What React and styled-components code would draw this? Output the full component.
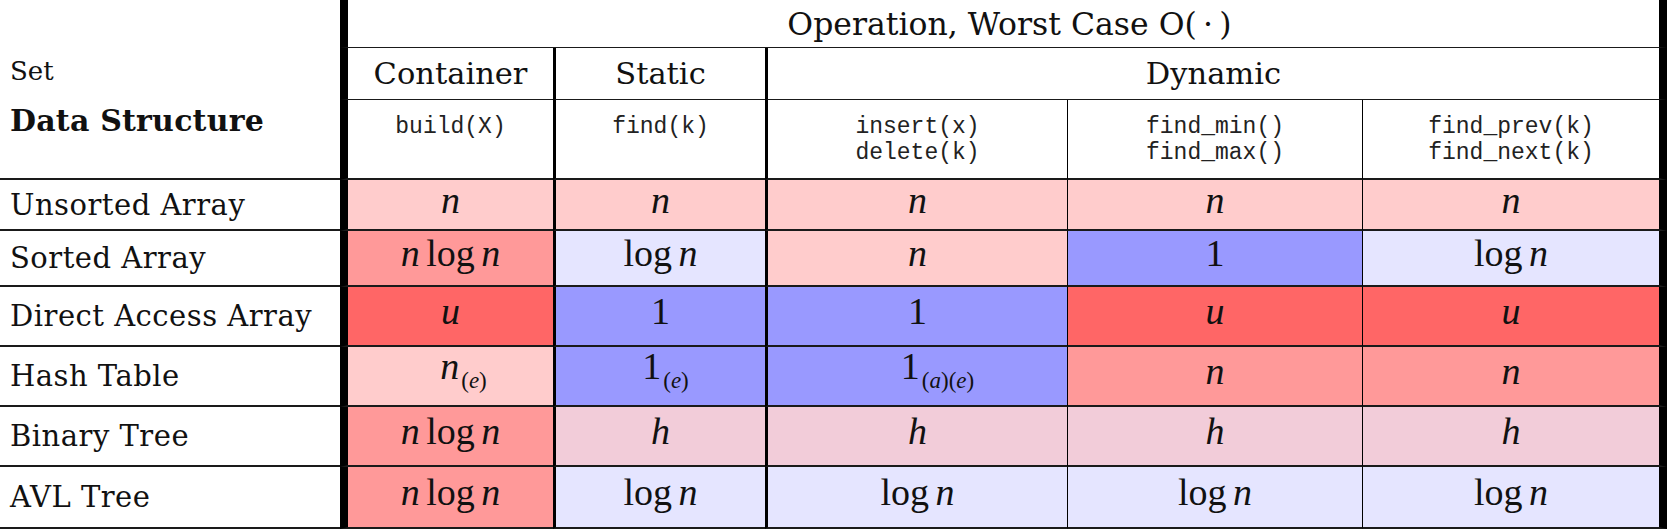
import styled, { createGlobalStyle } from "styled-components";

const GlobalStyle = createGlobalStyle`
  html, body {
    margin: 0;
    padding: 0;
    background: #fff;
  }
  body {
    font-family: "DejaVu Serif", serif;
    color: #111;
  }
`;

const PINK = "#ffcccc";
const SALMON = "#ff9999";
const RED = "#ff6666";
const LAV = "#e5e5ff";
const BLUE = "#9999ff";
const MAUVE = "#f2ccd9";

// left border width per column: thick bar after the labels, medium between groups
const LEFT = [0, 8, 3, 3, 1, 1];

const ops = [
    ["build(X)"],
    ["find(k)"],
    ["insert(x)", "delete(k)"],
    ["find_min()", "find_max()"],
    ["find_prev(k)", "find_next(k)"],
];

const rows = [
    { name: "Unsorted Array", cells: [["n", PINK], ["n", PINK], ["n", PINK], ["n", PINK], ["n", PINK]] },
    { name: "Sorted Array", cells: [["nlogn", SALMON], ["logn", LAV], ["n", PINK], ["1", BLUE], ["logn", LAV]] },
    { name: "Direct Access Array", cells: [["u", RED], ["1", BLUE], ["1", BLUE], ["u", RED], ["u", RED]] },
    { name: "Hash Table", cells: [["n(e)", PINK, 26], ["1(e)", BLUE, 10], ["1(a)(e)", BLUE, 40], ["n", SALMON], ["n", SALMON]] },
    { name: "Binary Tree", cells: [["nlogn", SALMON], ["h", MAUVE], ["h", MAUVE], ["h", MAUVE], ["h", MAUVE]] },
    { name: "AVL Tree", cells: [["nlogn", SALMON], ["logn", LAV], ["logn", LAV], ["logn", LAV], ["logn", LAV]] },
];

const Math = ({ expr }) => {
    switch (expr) {
        case "nlogn":
            return <Expr><Var>n</Var><Log>log</Log><Var>n</Var></Expr>;
        case "logn":
            return <Expr><Log $first>log</Log><Var>n</Var></Expr>;
        case "n(e)":
            return <Expr><Var>n</Var><Sub>(<i>e</i>)</Sub></Expr>;
        case "1(e)":
            return <Expr>1<Sub>(<i>e</i>)</Sub></Expr>;
        case "1(a)(e)":
            return <Expr>1<Sub>(<i>a</i>)(<i>e</i>)</Sub></Expr>;
        case "1":
            return <Expr>1</Expr>;
        default:
            return <Expr><Var>{expr}</Var></Expr>;
    }
};

const App = () => {
    return (
        <>
            <GlobalStyle />
            <Table>
                <LabelHead>
                    <SetTitle>Set</SetTitle>
                    <DsTitle>Data Structure</DsTitle>
                </LabelHead>
                <TopHeader $col={1} $last>
                    Operation, Worst Case O(&#8201;·&#8201;)
                </TopHeader>

                <GroupHead $col={1}>Container</GroupHead>
                <GroupHead $col={2}>Static</GroupHead>
                <GroupHead $col={3} $last $span={3}>Dynamic</GroupHead>

                {ops.map((lines, i) => (
                    <OpCell key={i} $col={i + 1} $last={i === ops.length - 1}>
                        {lines.map(l => <div key={l}>{l}</div>)}
                    </OpCell>
                ))}

                {rows.map(row => (
                    <Row key={row.name}>
                        <Label>{row.name}</Label>
                        {row.cells.map(([expr, bg, shift], i) => (
                            <Value
                                key={i}
                                $col={i + 1}
                                $last={i === row.cells.length - 1}
                                $bg={bg}
                                $shift={shift}
                            >
                                <Math expr={expr} />
                            </Value>
                        ))}
                    </Row>
                ))}
            </Table>
        </>
    );
};

const Row = styled.div`
    display: contents;
`;

const Table = styled.div`
    display: grid;
    grid-template-columns: 340px 213px 212px 302px 295px 305px;
    grid-template-rows: 48px 52px 80px 51px 56px 60px 60px 60px 62px;
    width: 1667px;
    height: 529px;
    overflow: hidden;
`;

const Cell = styled.div`
    box-sizing: border-box;
    min-width: 0;
    border-bottom: 2px solid #1a1a1a;
    border-left: ${p => LEFT[p.$col] || 0}px solid #000;
    border-right: ${p => (p.$last ? "8px solid #000" : "none")};
    background: ${p => p.$bg || "#fff"};
    display: flex;
    align-items: center;
    justify-content: center;
`;

const LabelHead = styled(Cell)`
    grid-row: span 3;
    flex-direction: column;
    align-items: flex-start;
    justify-content: flex-start;
    padding: 56px 0 0 10px;
`;

const SetTitle = styled.div`
    font-size: 26px;
    line-height: 30px;
`;

const DsTitle = styled.div`
    margin-top: 17px;
    font-size: 30px;
    line-height: 36px;
    font-weight: bold;
    letter-spacing: 0.2px;
`;

const TopHeader = styled(Cell)`
    grid-column: span 5;
    border-bottom-width: 1.5px;
    padding-left: 12px;
    font-size: 31.5px;
`;

const GroupHead = styled(Cell)`
    grid-column: span ${p => p.$span || 1};
    border-bottom-width: 1.5px;
    font-size: 30.5px;
`;

const OpCell = styled(Cell)`
    flex-direction: column;
    justify-content: flex-start;
    padding-top: 14px;
    font-family: "Liberation Mono", monospace;
    font-size: 23px;
    line-height: 26px;
    color: #222;
    white-space: pre;
`;

const Label = styled(Cell)`
    justify-content: flex-start;
    padding-left: 10px;
    font-size: 29px;
    letter-spacing: 0.5px;
    white-space: nowrap;
`;

const Value = styled(Cell)`
    font-family: "Liberation Serif", serif;
    font-size: 38px;
    line-height: 1;
    padding-bottom: ${p => (p.$shift ? 20 : 10)}px;
    padding-left: ${p => p.$shift || 0}px;
    white-space: nowrap;
`;

const Expr = styled.span`
    display: inline-block;
    line-height: 1;
`;

const Var = styled.i`
    font-style: italic;
`;

const Log = styled.span`
    margin: 0 0.17em 0 ${p => (p.$first ? 0 : "0.17em")};
`;

const Sub = styled.span`
    font-size: 23px;
    line-height: 0;
    vertical-align: -9px;
    margin-left: 2px;
`;

export default App;
